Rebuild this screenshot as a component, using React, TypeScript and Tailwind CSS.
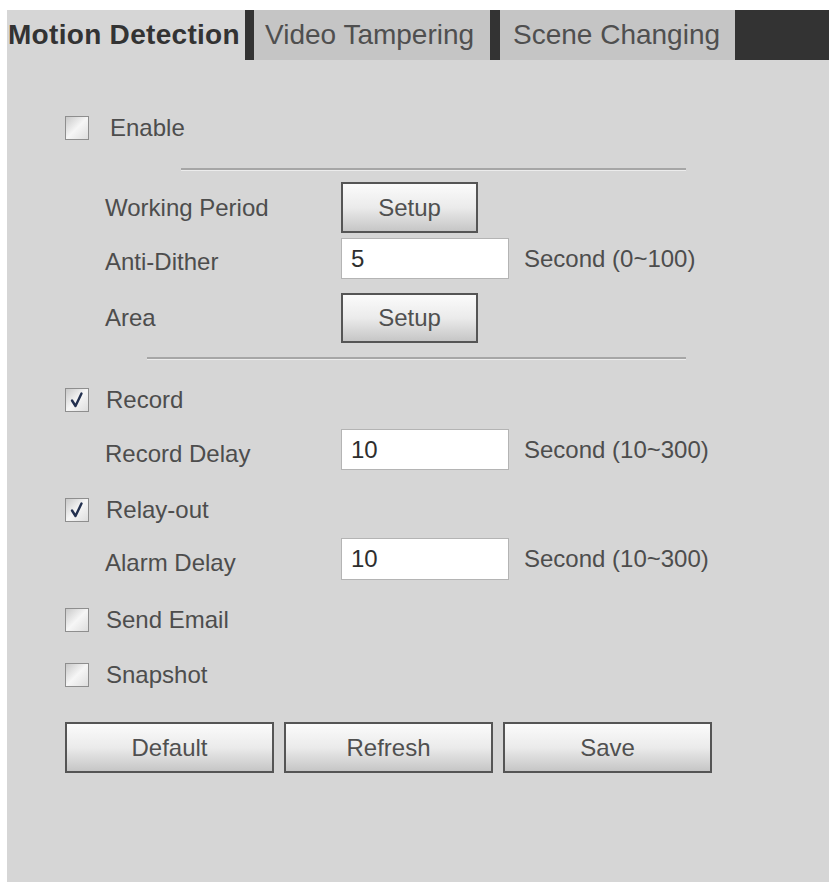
import React from "react";

const font = { fontFamily: '"Liberation Sans", Arial, sans-serif' };

const Checkbox = ({ checked }: { checked?: boolean }) => (
  <div className="w-[24px] h-[24px] border border-[#8e8e8e] bg-gradient-to-br from-[#c9c9c9] via-[#f6f6f6] to-[#dedede] flex items-center justify-center shrink-0">
    {checked && (
      <svg width="18" height="18" viewBox="0 0 18 18">
        <path d="M4 9.5 L7.5 15 L13.5 2.5" fill="none" stroke="#23304f" strokeWidth="2.4" strokeLinecap="round" strokeLinejoin="round" />
      </svg>
    )}
  </div>
);

const Button = ({ label, className }: { label: string; className: string }) => (
  <button className={`border-2 border-[#555] bg-gradient-to-b from-[#fbfbfb] via-[#ebebeb] to-[#c6c6c6] text-[24px] text-[#505050] ${className}`}>
    {label}
  </button>
);

const Input = ({ value }: { value: string }) => (
  <div className="w-[168px] h-full bg-white border border-[#b4b4b4] pl-[9px] flex items-center text-[24px] text-[#2e2e2e]">
    {value}
  </div>
);

const Rule = ({ className }: { className: string }) => (
  <div className={`h-[3px] border-t-2 border-[#a6a6a6] border-b border-b-[#ececec] ${className}`} />
);

export default function App() {
  return (
    <div className="w-[832px] h-[884px] bg-white pl-[7px] pt-[10px] pr-[3px]" style={font}>
      <div className="w-[822px] h-[872px] bg-[#d6d6d6] flex flex-col">
        {/* tabs */}
        <div className="flex h-[50px] shrink-0">
          <div className="w-[238px] pl-[1px] leading-[50px] text-[28px] font-bold text-[#333] tracking-[0.3px]">
            Motion Detection
          </div>
          <div className="w-[9px] bg-[#333]" />
          <div className="w-[236px] bg-[#c5c5c5] pl-[11px] leading-[50px] text-[28px] text-[#4f4f4f]">Video Tampering</div>
          <div className="w-[10px] bg-[#333]" />
          <div className="w-[235px] bg-[#c5c5c5] pl-[13px] leading-[50px] text-[28px] text-[#4f4f4f]">Scene Changing</div>
          <div className="flex-1 bg-[#333]" />
        </div>

        {/* body */}
        <div className="flex flex-col text-[24px] text-[#4d4d4d]">
          <div className="mt-[56px] h-[24px] flex items-center pl-[58px]">
            <Checkbox />
            <span className="ml-[21px]">Enable</span>
          </div>

          <Rule className="mt-[28px] ml-[174px] w-[505px]" />

          <div className="mt-[11px] h-[51px] flex items-center pl-[98px]">
            <span className="w-[236px]">Working Period</span>
            <Button label="Setup" className="w-[137px] h-full" />
          </div>

          <div className="mt-[5px] h-[41px] flex items-center pl-[98px]">
            <span className="w-[236px] mt-[6px]">Anti-Dither</span>
            <Input value="5" />
            <span className="ml-[15px]">Second (0~100)</span>
          </div>

          <div className="mt-[14px] h-[50px] flex items-center pl-[98px]">
            <span className="w-[236px]">Area</span>
            <Button label="Setup" className="w-[137px] h-full" />
          </div>

          <Rule className="mt-[14px] ml-[140px] w-[539px]" />

          <div className="mt-[28px] h-[24px] flex items-center pl-[58px]">
            <Checkbox checked />
            <span className="ml-[17px]">Record</span>
          </div>

          <div className="mt-[17px] h-[41px] flex items-center pl-[98px]">
            <span className="w-[236px] mt-[8px]">Record Delay</span>
            <Input value="10" />
            <span className="ml-[15px]">Second (10~300)</span>
          </div>

          <div className="mt-[28px] h-[24px] flex items-center pl-[58px]">
            <Checkbox checked />
            <span className="ml-[17px]">Relay-out</span>
          </div>

          <div className="mt-[16px] h-[42px] flex items-center pl-[98px]">
            <span className="w-[236px] mt-[8px]">Alarm Delay</span>
            <Input value="10" />
            <span className="ml-[15px]">Second (10~300)</span>
          </div>

          <div className="mt-[27px] h-[25px] flex items-center pl-[58px]">
            <Checkbox />
            <span className="ml-[17px]">Send Email</span>
          </div>

          <div className="mt-[30px] h-[25px] flex items-center pl-[58px]">
            <Checkbox />
            <span className="ml-[17px]">Snapshot</span>
          </div>

          <div className="mt-[35px] h-[51px] flex gap-[10px] pl-[58px]">
            <Button label="Default" className="w-[209px] h-full" />
            <Button label="Refresh" className="w-[209px] h-full" />
            <Button label="Save" className="w-[209px] h-full" />
          </div>
        </div>
      </div>
    </div>
  );
}
